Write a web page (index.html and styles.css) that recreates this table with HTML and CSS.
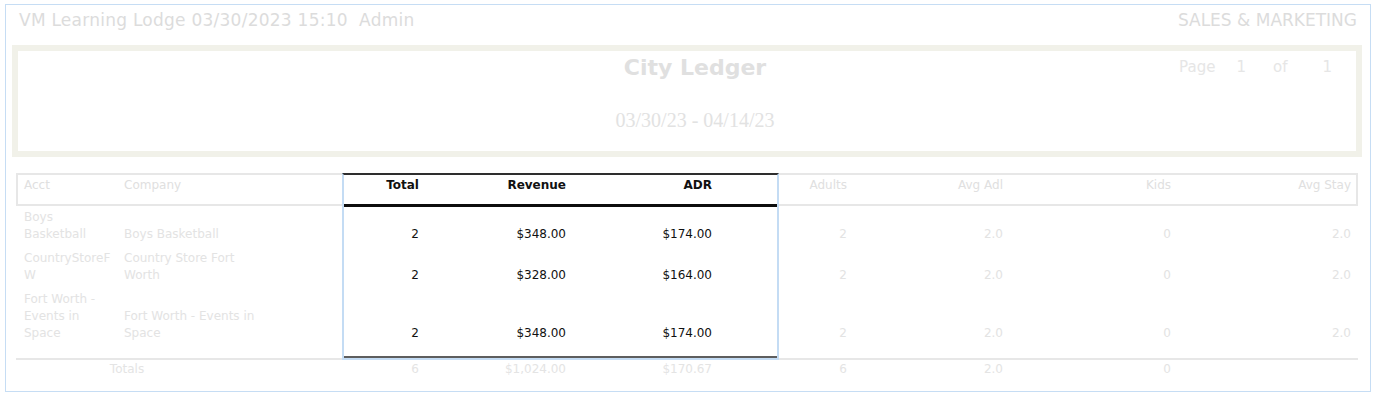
FILE: index.html
```html
<!DOCTYPE html>
<html lang="en">
<head>
<meta charset="utf-8">
<title>City Ledger</title>
<link rel="stylesheet" href="styles.css">
</head>
<body>
<div class="page">
  <div class="topbar">
    <span class="topbar-left">VM Learning Lodge 03/30/2023 15:10&nbsp; Admin</span>
    <span class="topbar-right">SALES &amp; MARKETING</span>
  </div>

  <div class="titlebox">
    <div class="tb-left"></div>
    <div class="tb-center">
      <div class="title">City Ledger</div>
      <div class="range">03/30/23 - 04/14/23</div>
    </div>
    <div class="tb-right">
      <span class="pg-label">Page</span>
      <span class="pg-num">1</span>
      <span class="pg-of">of</span>
      <span class="pg-total">1</span>
    </div>
  </div>

  <div class="report">
    <table class="ledger">
      <colgroup>
        <col class="c-acct">
        <col class="c-company">
        <col class="c-total">
        <col class="c-revenue">
        <col class="c-adr">
        <col class="c-adults">
        <col class="c-avgadl">
        <col class="c-kids">
        <col class="c-avgstay">
      </colgroup>
      <thead>
        <tr>
          <th class="acct">Acct</th>
          <th class="company">Company</th>
          <th class="sel">Total</th>
          <th class="sel">Revenue</th>
          <th class="sel">ADR</th>
          <th>Adults</th>
          <th>Avg Adl</th>
          <th>Kids</th>
          <th class="last">Avg Stay</th>
        </tr>
      </thead>
      <tbody>
        <tr>
          <td class="acct">Boys<br>Basketball</td>
          <td class="company">Boys Basketball</td>
          <td class="sel">2</td>
          <td class="sel">$348.00</td>
          <td class="sel">$174.00</td>
          <td>2</td>
          <td>2.0</td>
          <td>0</td>
          <td class="last">2.0</td>
        </tr>
        <tr>
          <td class="acct">CountryStoreFW</td>
          <td class="company">Country Store Fort Worth</td>
          <td class="sel">2</td>
          <td class="sel">$328.00</td>
          <td class="sel">$164.00</td>
          <td>2</td>
          <td>2.0</td>
          <td>0</td>
          <td class="last">2.0</td>
        </tr>
        <tr>
          <td class="acct">Fort Worth - Events in Space</td>
          <td class="company">Fort Worth - Events in Space</td>
          <td class="sel">2</td>
          <td class="sel">$348.00</td>
          <td class="sel">$174.00</td>
          <td>2</td>
          <td>2.0</td>
          <td>0</td>
          <td class="last">2.0</td>
        </tr>
        <tr class="spacer"><td colspan="9"></td></tr>
      </tbody>
      <tfoot>
        <tr>
          <td class="totals-label" colspan="2">Totals</td>
          <td>6</td>
          <td>$1,024.00</td>
          <td>$170.67</td>
          <td>6</td>
          <td>2.0</td>
          <td>0</td>
          <td class="last"></td>
        </tr>
      </tfoot>
    </table>
    <div class="selection"></div>
  </div>
</div>
</body>
</html>
```

FILE: styles.css
```css
* {
  box-sizing: border-box;
}

html, body {
  margin: 0;
  padding: 0;
  background: #ffffff;
}

body {
  font-family: "DejaVu Sans", Verdana, sans-serif;
  color: #e2e2e2;
}

.page {
  margin: 4px 0 0 5px;
  width: 1366px;
  border: 1px solid #c6ddf4;
  padding: 0 0 11px 0;
}

/* top line */
.topbar {
  display: flex;
  justify-content: space-between;
  padding: 5px 13px 0 13px;
  font-size: 17px;
  line-height: 20px;
  color: #dcdcdc;
  white-space: nowrap;
}

.topbar-left {
  letter-spacing: 0.25px;
}

/* title box */
.titlebox {
  margin: 15px 8px 0 6px;
  height: 112px;
  border: 6px solid #f1f1e9;
  display: grid;
  grid-template-columns: 1fr auto 1fr;
  align-items: start;
}

.tb-center {
  padding-left: 16px;
  text-align: center;
}

.title {
  margin-top: 4px;
  font-size: 22px;
  line-height: 26px;
  font-weight: bold;
  color: #e0e0e0;
}

.range {
  margin-top: 27px;
  font-family: "Liberation Serif", "Times New Roman", serif;
  font-size: 20px;
  line-height: 24px;
  color: #e2e2e2;
  white-space: nowrap;
}

.tb-right {
  display: flex;
  justify-content: flex-end;
  padding: 7px 24px 0 0;
  font-size: 15px;
  line-height: 18px;
  color: #e6e6e6;
}

.pg-num {
  margin-left: 21px;
}

.pg-of {
  margin-left: 27px;
}

.pg-total {
  margin-left: 35px;
}

/* report table */
.report {
  position: relative;
  margin: 16px 12px 0 10px;
}

.ledger {
  table-layout: fixed;
  width: 1342px;
  border-collapse: separate;
  border-spacing: 0;
  font-size: 12px;
  line-height: 17px;
  color: #e3e3e3;
}

.c-acct { width: 106px; }
.c-company { width: 146px; }
.c-total { width: 155px; }
.c-revenue { width: 147px; }
.c-adr { width: 146px; }
.c-adults { width: 135px; }
.c-avgadl { width: 156px; }
.c-kids { width: 168px; }
.c-avgstay { width: 183px; }

.ledger th {
  font-weight: normal;
  text-align: right;
  padding: 2px 4px 10px 4px;
  border-top: 2px solid #e7e7e7;
  border-bottom: 2px solid #e7e7e7;
  color: #e0e0e0;
  white-space: nowrap;
}

.ledger th.acct {
  text-align: left;
  border-left: 2px solid #e7e7e7;
  padding-left: 6px;
}

.ledger th.company {
  text-align: left;
  padding-left: 2px;
}

.ledger th.last {
  border-right: 2px solid #e7e7e7;
  padding-right: 5px;
}

.ledger th.sel {
  font-weight: bold;
  color: #111111;
}

.ledger td {
  text-align: right;
  vertical-align: bottom;
  padding: 3px 4px 4px 4px;
}

.ledger td.acct {
  text-align: left;
  padding-left: 8px;
  padding-right: 3px;
  overflow-wrap: anywhere;
}

.ledger td.company {
  text-align: left;
  padding-left: 2px;
  padding-right: 4px;
}

.ledger td.last {
  padding-right: 7px;
}

.ledger td.sel {
  color: #111111;
}

.ledger .spacer td {
  height: 12px;
  padding: 0;
}

.ledger tfoot td {
  border-top: 2px solid #e7e7e7;
  padding-top: 1px;
  padding-bottom: 2px;
  color: #e4e4e4;
}

.ledger tfoot td.totals-label {
  text-align: center;
  padding-right: 34px;
}

/* column selection highlight drawn over the table */
.selection {
  position: absolute;
  left: 326px;
  top: 0;
  width: 437px;
  height: 187px;
  border: 2px solid #c4dcf4;
  border-top: 2px solid #2e2e2e;
  pointer-events: none;
}

.selection::before {
  content: "";
  position: absolute;
  left: 0;
  right: 0;
  top: 29px;
  height: 3px;
  background: #0d0d0d;
}

.selection::after {
  content: "";
  position: absolute;
  left: 0;
  right: 0;
  bottom: 0;
  height: 2px;
  background: #5e5e5e;
}
```
